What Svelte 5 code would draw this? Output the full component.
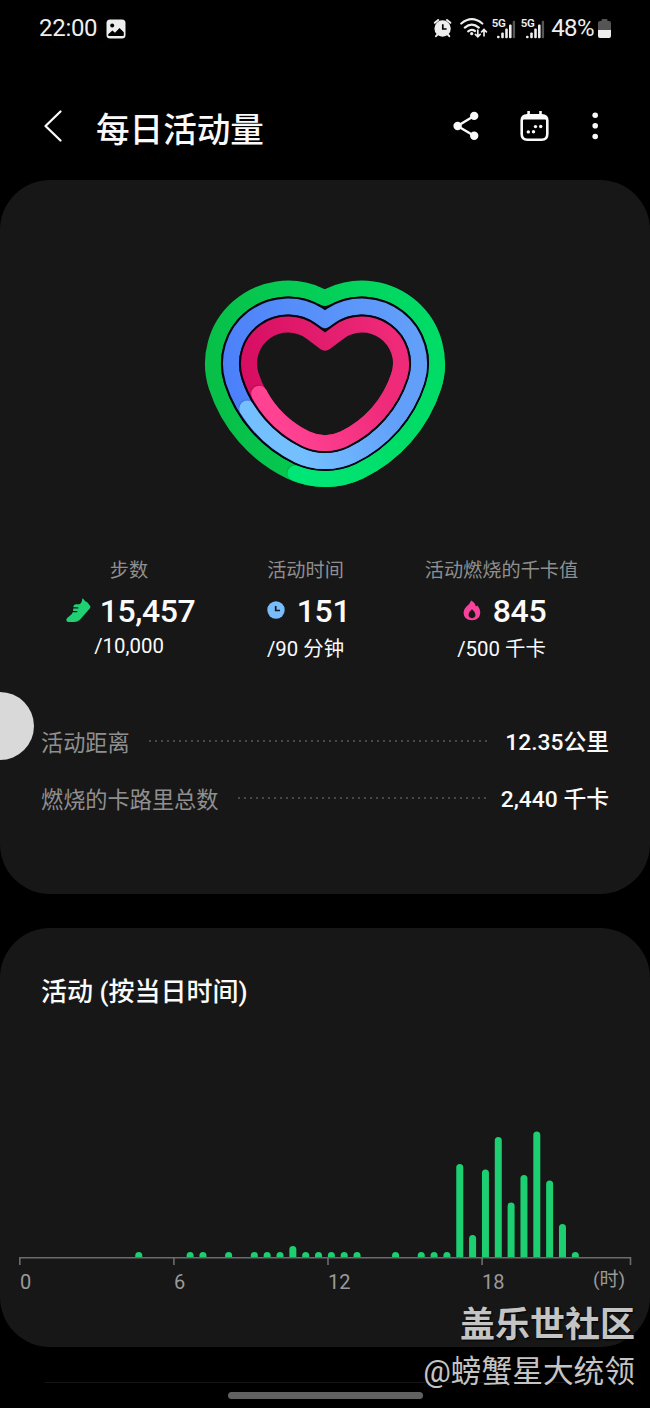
<script>
    const goals = [
        { id: 'steps', label: '步数', value: '15,457', target: '/10,000' },
        { id: 'time', label: '活动时间', value: '151', target: '/90 分钟' },
        { id: 'kcal', label: '活动燃烧的千卡值', value: '845', target: '/500 千卡' }
    ];

    const totals = [
        { label: '活动距离', value: '12.35公里' },
        { label: '燃烧的卡路里总数', value: '2,440 千卡' }
    ];

    // rings share the same arc centres, only the radii change
    const LOBE = { x: 288, y: 363.6 };
    const TIP = { x: 325, y: 399 };

    const rings = [
        { id: 'green', r: 75, notch: 298, phi: 25, cap: [295.5, 473.2], from: '#08bf47', to: '#00dc66', tip: '#00e676' },
        { id: 'blue', r: 57, notch: 320, phi: 32, cap: [247.3, 408.5], from: '#4c80fa', to: '#629ff9', tip: '#74c0ff' },
        { id: 'pink', r: 39, notch: 342.5, phi: 37, cap: [259.2, 393.7], from: '#d60d61', to: '#ee2a79', tip: '#ff4292' }
    ].map (ring => ({ ...ring, ...ringPaths (ring) }));

    function ringPaths ({ r, notch, phi, cap }) {
        const big = r + 67;
        const tip = r + 5;
        const a = phi * Math.PI / 180;
        const tx = LOBE.x + r * Math.sin (a);
        const ty = LOBE.y - r * Math.cos (a);
        const sx = LOBE.x - 0.952 * r;
        const sy = LOBE.y + 0.307 * r;
        const bx = TIP.x - 0.432 * tip;
        const by = TIP.y + 0.903 * tip;
        const m = x => 650 - x;
        const full = `M325 ${notch}L${m (tx)} ${ty}A${r} ${r} 0 0 1 ${m (sx)} ${sy}`
            + `A${big} ${big} 0 0 1 ${m (bx)} ${by}A${tip} ${tip} 0 0 1 ${bx} ${by}`
            + `A${big} ${big} 0 0 1 ${sx} ${sy}A${r} ${r} 0 0 1 ${tx} ${ty}Z`;
        let lap = `M${m (LOBE.x - r)} ${LOBE.y}A${r} ${r} 0 0 1 ${m (sx)} ${sy}`
            + `A${big} ${big} 0 0 1 ${m (bx)} ${by}`;
        if (cap[0] < bx)
            lap += `A${tip} ${tip} 0 0 1 ${bx} ${by}A${big} ${big} 0 0 1 ${cap[0]} ${cap[1]}`;
        else
            lap += `A${tip} ${tip} 0 0 1 ${cap[0]} ${cap[1]}`;
        return { full, lap };
    }

    // one slot for every half hour
    const SLOT = 12.84;
    const bars = [
        [9, 5.5], [13, 5.5], [14, 5.5], [16, 5.5], [18, 5.5], [19, 5.5], [20, 5.5], [21, 11.5],
        [22, 5.5], [23, 5.5], [24, 5.5], [25, 5.5], [26, 5.5], [29, 5.5], [31, 5.5], [32, 5.5],
        [33, 5.5], [34, 93.5], [35, 22.5], [36, 88], [37, 120.5], [38, 55], [39, 82.5],
        [40, 126], [41, 77], [42, 33.5], [43, 5.5]
    ];
    const hours = [0, 6, 12, 18];
</script>

<div class="screen">
    <div class="status">
        <span class="clock">22:00</span>
        <svg class="photo" width="20" height="20" viewBox="0 0 20 20">
            <rect x=".5" y=".5" width="19" height="19" rx="3.5" fill="#eee"/>
            <circle cx="6.2" cy="6.4" r="2" fill="#000"/>
            <path d="M2.2 15.2L6.4 11.4L9 13.8L13.5 9L17.8 13.2V16.2Q17.8 17 17 17H3Q2.2 17 2.2 16.2Z" fill="#000"/>
        </svg>
        <svg class="signals" width="112" height="24" viewBox="433 16 112 24">
            <g stroke="#eee" fill="none" stroke-width="2" stroke-linecap="round">
                <path d="M434.8 22.8L438.2 20M450.4 22.8L447 20M437.5 34.5L436 36.2M447.8 34.5L449.3 36.2"/>
                <circle cx="442.6" cy="28.5" r="7.2" fill="#eee"/>
                <path d="M442.8 24.3V29H446.6" stroke="#000" stroke-width="1.7" stroke-linecap="butt"/>
                <path d="M461.3 23.5Q471.8 14.8 482.3 23.5M464.8 27.6Q471.8 21.6 478.8 27.6M468.2 31.3Q471.6 28.7 475 31" stroke-width="2.2"/>
                <path d="M477.8 30.2V36.2M475.4 34.3L477.8 36.8L480.2 34.3M484 35.8V29.8M481.6 31.9L484 29.4L486.4 31.9" stroke-width="1.7"/>
            </g>
            <circle cx="471.7" cy="33.7" r="1.6" fill="#eee"/>
            {#each [0, 29] as x}
                <g fill="#eee">
                    <text x={491.8 + x} y="27" class="net">5G</text>
                    <rect x={497 + x} y="35.7" width="2.6" height="2.6" rx="1"/>
                    <rect x={501.2 + x} y="32.5" width="2.6" height="5.8" rx="1"/>
                    <rect x={505.2 + x} y="28.6" width="2.6" height="9.7" rx="1"/>
                    <rect x={509 + x} y="24.4" width="2.6" height="13.9" rx="1"/>
                    <rect x={512.7 + x} y="20.8" width="2.4" height="17.5" rx="1" fill="#555"/>
                </g>
            {/each}
        </svg>
        <span class="percent">48%</span>
        <svg class="battery" width="13" height="20" viewBox="0 0 13 20">
            <path d="M3.5 2V1Q3.5 0 4.5 0H8.5Q9.5 0 9.5 1V2H11Q13 2 13 4V11.5H0V4Q0 2 2 2Z" fill="#555"/>
            <path d="M0 11H13V17Q13 19 11 19H2Q0 19 0 17Z" fill="#eee"/>
        </svg>
    </div>

    <header>
        <svg width="20" height="34" viewBox="0 0 20 34">
            <path d="M17.5 2.5L2.5 17L17.5 31.5" fill="none" stroke="#fafafa" stroke-width="2.3" stroke-linecap="round" stroke-linejoin="round"/>
        </svg>
        <h1>每日活动量</h1>
        <svg class="actions" width="150" height="34" viewBox="451 109 150 34">
            <g fill="#fafafa">
                <path d="M474 116L457.5 126L474 135.8" fill="none" stroke="#fafafa" stroke-width="2.4"/>
                <circle cx="457.6" cy="126" r="4.2"/>
                <circle cx="474.2" cy="115.9" r="4.2"/>
                <circle cx="474.2" cy="135.8" r="4.2"/>
                <path d="M527.3 111H529.9V114H539.2V111H541.8V114Q548.6 114.4 548.6 120.5V134Q548.6 141 541.6 141H527.4Q520.4 141 520.4 134V120.5Q520.4 114.4 527.3 114ZM523 120.5V134Q523 138.5 527.5 138.5H541.5Q546 138.5 546 134V120.5Q546 119.5 545 119.5H524Q523 119.5 523 120.5Z" fill-rule="evenodd"/>
                <circle cx="528.3" cy="131.9" r="1.7"/>
                <circle cx="533.5" cy="131.8" r="1.7"/>
                <circle cx="535.5" cy="126.6" r="1.7"/>
                <circle cx="540.7" cy="126.5" r="1.7"/>
                <circle cx="595.2" cy="115.2" r="2.8"/>
                <circle cx="595.2" cy="125.7" r="2.8"/>
                <circle cx="595.2" cy="136.5" r="2.8"/>
            </g>
        </svg>
    </header>

    <section class="card summary">
        <svg class="heart" width="250" height="216" viewBox="200 276 250 216">
            <defs>
                <filter id="soft" x="-50%" y="-50%" width="200%" height="200%">
                    <feGaussianBlur stdDeviation="1.3"/>
                </filter>
                {#each rings as ring}
                    <linearGradient id={ring.id} gradientUnits="userSpaceOnUse" x1={LOBE.x - ring.r} y1="400" x2={362 + ring.r} y2="363">
                        <stop offset="0" stop-color={ring.from}/>
                        <stop offset="1" stop-color={ring.to}/>
                    </linearGradient>
                    <linearGradient id={ring.id + '-lap'} gradientUnits="userSpaceOnUse" x1="390" y1="405" x2="295" y2="450">
                        <stop offset="0" stop-color={ring.to}/>
                        <stop offset="1" stop-color={ring.tip}/>
                    </linearGradient>
                {/each}
            </defs>
            <g fill="none" stroke-width="16" stroke-linejoin="round">
                {#each rings as ring}
                    {#if ring.id !== 'green'}
                        <path d={ring.full} stroke="#060612" stroke-width="20"/>
                    {/if}
                    <path d={ring.full} fill="#171717" stroke="url(#{ring.id})"/>
                    <circle cx={ring.cap[0] - .8} cy={ring.cap[1] - 1.3} r="7" fill="#000" opacity=".25" filter="url(#soft)"/>
                    <path d={ring.lap} stroke="url(#{ring.id}-lap)"/>
                    <circle cx={ring.cap[0]} cy={ring.cap[1]} r="8" fill={ring.tip}/>
                {/each}
            </g>
        </svg>

        <div class="goals">
            {#each goals as goal}
                <div class={'goal ' + goal.id}>
                    <div class="label">{goal.label}</div>
                    <div class="value">
                        {#if goal.id === 'steps'}
                            <svg width="25" height="25" viewBox="0 0 25 25">
                                <path d="M16.3 .8Q17 .3 17.6 1.2Q19 3.8 21.5 4.5L24 7.8Q24.8 9 24 10.3L15 20.5Q12 24 8 24H2.5Q.2 24 .3 21.8Q.5 19.7 3 18.5Q6.5 16.5 7 13.5L7.5 8Q8 6.3 10 6.3H13.5Q15.8 5.5 16.3 .8Z" fill="#1ed273"/>
                                <path d="M6 9.9H12.3M5.5 13.6H11.3" fill="none" stroke="#171717" stroke-width="1.3"/>
                            </svg>
                        {:else if goal.id === 'time'}
                            <svg width="18" height="18" viewBox="0 0 18 18">
                                <circle cx="9" cy="9" r="8.7" fill="#78bcfc"/>
                                <path d="M8.7 5V9.5H13" fill="none" stroke="#171717" stroke-width="1.7"/>
                            </svg>
                        {:else}
                            <svg width="18" height="21" viewBox="0 0 18 21">
                                <path d="M8.2 .5Q12.2 2.5 12.8 6.5L14.5 5.5Q17.3 9 17.3 12.5Q17 20 8.8 20.3Q.8 20 .5 12.5Q.6 9 3.5 6.5Q6.8 4 8.2 .5Z" fill="#f8429c"/>
                                <path d="M9 9.2Q12.5 12 12.5 14.8Q12.3 18 9 18.2Q5.7 18 5.5 14.8Q5.5 12 9 9.2Z" fill="#171717"/>
                            </svg>
                        {/if}
                        <b>{goal.value}</b>
                    </div>
                    <div class="target">{goal.target}</div>
                </div>
            {/each}
        </div>

        <div class="totals">
            {#each totals as row}
                <div class="row">
                    <span>{row.label}</span>
                    <i></i>
                    <b>{row.value}</b>
                </div>
            {/each}
        </div>
    </section>

    <section class="card hourly">
        <h2>活动 (按当日时间)</h2>
        <svg class="chart" width="650" height="150" viewBox="0 1120 650 150">
            {#each bars as [slot, h]}
                <path d="M{20 + slot * SLOT - .3} 1257.5v{-(h - 3.5)}a3.5 3.5 0 0 1 7 0v{h - 3.5}z" fill="#1dcf70"/>
            {/each}
            <path d="M19.8 1265V1257.8H630.5V1265M173.9 1258V1265M328 1258V1265M482.1 1258V1265" fill="none" stroke="#6c6c6c" stroke-width="1.6"/>
        </svg>
        <div class="axis">
            {#each hours as hour}
                <span>{hour}</span>
            {/each}
            <em>(时)</em>
        </div>
    </section>

    <div class="next"></div>
    <div class="home"></div>

    <div class="bubble"></div>
    <div class="mark">
        <strong>盖乐世社区</strong>
        <span>@螃蟹星大统领</span>
    </div>
</div>

<style>
    :global(body) {
        background: #000;
    }
    .screen {
        position: relative;
        width: 650px;
        height: 1408px;
        overflow: hidden;
        background: #000;
        color: #fafafa;
        font-family: Roboto, "Noto Sans CJK SC", sans-serif;
    }
    svg {
        display: block;
        flex: none;
    }
    .status {
        display: flex;
        align-items: center;
        height: 56px;
        padding: 0 39px;
        font-size: 24px;
        line-height: 56px;
        color: #eee;
    }
    .clock {
        letter-spacing: -0.3px;
    }
    .photo {
        margin: 1px 0 0 9px;
    }
    .signals {
        margin-left: auto;
    }
    .net {
        font-size: 11.5px;
        font-weight: 600;
        letter-spacing: -0.3px;
    }
    .percent {
        margin: 0 4px 0 6px;
        letter-spacing: -0.6px;
    }
    .battery {
        margin-top: 2px;
    }
    header {
        display: flex;
        align-items: center;
        height: 124px;
        padding: 0 49px 0 43px;
    }
    header > svg {
        margin-top: 16px;
    }
    h1 {
        margin: 25px auto 0 33px;
        font-size: 33.6px;
        line-height: 48px;
        font-weight: 500;
    }
    .card {
        background: #171717;
        border-radius: 50px;
        overflow: hidden;
    }
    .summary {
        height: 714px;
    }
    .heart {
        margin: 96px auto 0;
    }
    .goals {
        display: flex;
        margin-top: 65px;
    }
    .goal {
        display: flex;
        flex-direction: column;
        align-items: center;
    }
    .goal.steps {
        width: 258px;
    }
    .goal.time {
        width: 95px;
    }
    .goal.kcal {
        width: 297px;
    }
    .label {
        font-size: 19.2px;
        line-height: 28px;
        color: #8f8f8f;
        white-space: nowrap;
    }
    .value {
        display: flex;
        align-items: center;
        height: 42px;
        margin-top: 5px;
    }
    .value svg {
        margin-top: -2px;
    }
    .value b {
        font-size: 32px;
        line-height: 42px;
        font-weight: 500;
        letter-spacing: -0.4px;
        margin-left: 12px;
    }
    .steps .value {
        padding-left: 3px;
    }
    .steps .value b {
        margin-left: 9px;
    }
    .time .value,
    .kcal .value {
        padding-left: 6px;
    }
    .target {
        margin-top: 2px;
        font-size: 20.4px;
        line-height: 30px;
        white-space: nowrap;
    }
    .steps .target {
        margin-top: -1px;
    }
    .totals {
        margin-top: 48px;
        padding: 0 41px;
    }
    .row {
        display: flex;
        align-items: center;
        height: 57px;
        font-size: 22.2px;
    }
    .row span {
        color: #8f8f8f;
    }
    .row i {
        flex: 1;
        height: 2px;
        margin: 0 15px 0 18px;
        background: radial-gradient(circle at 2px 1px, #484848 1px, transparent 1.3px) 0 0 / 6px 2px repeat-x;
    }
    .row b {
        font-size: 22.8px;
        font-weight: 500;
    }
    .hourly {
        height: 419px;
        margin-top: 34px;
    }
    h2 {
        margin: 45px 0 0 41px;
        font-size: 26px;
        line-height: 38px;
        font-weight: 500;
    }
    .chart {
        margin-top: 109px;
    }
    .axis {
        display: flex;
        padding-left: 20px;
        font-size: 20px;
        line-height: 24px;
        color: #9a9a9a;
    }
    .axis span {
        width: 154px;
    }
    .axis em {
        margin: -2px 0 0 -43px;
        font-size: 19px;
        font-style: normal;
        white-space: nowrap;
    }
    .next {
        height: 1px;
        margin: 35px 45px 0;
        background: #161616;
    }
    .home {
        width: 195px;
        height: 7px;
        margin: 9px auto 0;
        border-radius: 4px;
        background: #616161;
    }
    .bubble {
        position: absolute;
        left: 0;
        top: 692px;
        width: 34px;
        height: 68px;
        border-radius: 0 34px 34px 0;
        background: #d9d9d9;
    }
    .mark {
        position: absolute;
        right: 15px;
        top: 1303px;
        display: flex;
        flex-direction: column;
        align-items: flex-end;
        color: #c4c4c4;
        text-shadow: 1px 1px 2px #000;
        white-space: nowrap;
    }
    .mark strong {
        font-size: 35px;
        line-height: 46px;
        font-weight: 700;
    }
    .mark span {
        font-size: 30.7px;
        line-height: 46px;
    }
</style>
